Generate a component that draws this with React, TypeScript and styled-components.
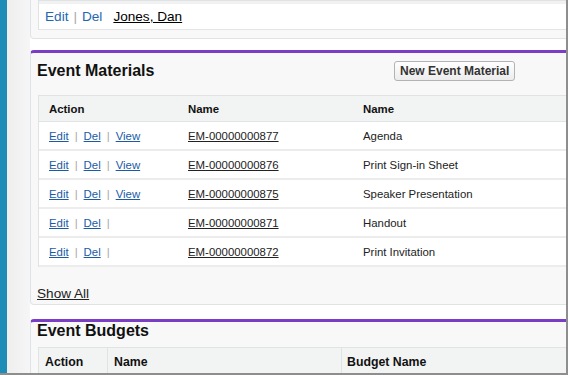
import React from "react";
import styled, { createGlobalStyle, css } from "styled-components";

const GlobalStyle = createGlobalStyle`
  html, body {
    margin: 0;
    padding: 0;
    background: #fff;
    font-family: "Liberation Sans", Arial, Helvetica, sans-serif;
  }
  * { box-sizing: border-box; }
`;

const Frame = styled.div`
  width: 568px;
  height: 375px;
  display: flex;
  overflow: hidden;
  border-right: 2px solid #8e8e8e;
  border-bottom: 2px solid #8e8e8e;
  background: #fff;
`;

const SideRail = styled.div`
  width: 7px;
  flex: none;
  background: #1b8db6;
`;

const Gutter = styled.div`
  width: 23px;
  flex: none;
  background: linear-gradient(to right, #eeeeee, #f6f6f6);
`;

const Main = styled.div`
  flex: 1;
  min-width: 0;
  display: flex;
  flex-direction: column;
  overflow: hidden;
`;

const Panel = styled.section<{ $tail?: boolean; $gap?: number }>`
  margin-right: -14px;
  margin-top: ${(p) => p.$gap ?? 0}px;
  padding: 0 0 0 6px;
  background: #f8f8f8;
  border: 1px solid #e0e3e5;
  border-top: 3px solid #7a3dc5;
  border-radius: 4px 0 0 4px;
  flex: none;
  ${(p) =>
    p.$tail &&
    css`
      border-top: none;
      border-radius: 0 0 0 4px;
      padding-bottom: 8px;
    `}
`;

const PanelHeader = styled.div<{ $compact?: boolean }>`
  display: flex;
  align-items: center;
  height: ${(p) => (p.$compact ? 18 : 36)}px;
  margin-bottom: ${(p) => (p.$compact ? 7 : 6)}px;
`;

const Title = styled.h2<{ $width?: number }>`
  margin: 0;
  width: ${(p) => (p.$width ? `${p.$width}px` : "auto")};
  font-size: 16px;
  font-weight: bold;
  color: #111;
  line-height: 18px;
`;

const NewButton = styled.button`
  height: 20px;
  padding: 0 5px;
  font-family: inherit;
  font-size: 12px;
  font-weight: bold;
  color: #333;
  background: linear-gradient(#ffffff, #ececec);
  border: 1px solid #b3b3b3;
  border-radius: 3px;
  line-height: 18px;
`;

const Table = styled.div`
  margin-left: 1px;
  background: #fff;
  border: 1px solid #e0e3e5;
  border-right: none;
  border-bottom: none;
`;

const Grid = styled.div<{ $cols: string }>`
  display: grid;
  grid-template-columns: ${(p) => p.$cols};
  align-items: stretch;
`;

const HeaderRow = styled(Grid)<{ $height: number }>`
  height: ${(p) => p.$height}px;
  background: #f2f3f3;
  border-bottom: 1px solid #e0e3e5;
`;

const HeadCell = styled.div<{ $pad: number; $size: number; $divided?: boolean }>`
  display: flex;
  align-items: center;
  padding-left: ${(p) => p.$pad}px;
  font-size: ${(p) => p.$size}px;
  font-weight: bold;
  color: #111;
  ${(p) => p.$divided && "border-left: 1px solid #e0e3e5;"}
`;

const DataRow = styled(Grid)`
  height: 29px;
  border-bottom: 2px solid #ececec;
`;

const Cell = styled.div`
  display: flex;
  align-items: center;
  gap: 6px;
  padding-left: 10px;
  font-size: 11.4px;
  color: #222;
  white-space: nowrap;
`;

const ActionLink = styled.a`
  color: #1a5ba6;
  text-decoration: underline;
  cursor: pointer;
`;

const Sep = styled.span<{ $size?: number }>`
  color: #a8a8a8;
  font-size: ${(p) => p.$size ?? 11.4}px;
`;

const RecordLink = styled.a`
  color: #222;
  text-decoration: underline;
  cursor: pointer;
`;

const TopRow = styled.div`
  height: 29px;
  display: flex;
  align-items: center;
  gap: 5px;
  padding-left: 6px;
  border-top: 3px solid #f1f1f1;
  border-bottom: 1px solid #e3e3e3;
  font-size: 13.6px;
`;

const PlainLink = styled.a`
  color: #1f68b3;
  text-decoration: none;
`;

const OwnerLink = styled.a`
  margin-left: 6px;
  color: #000;
  text-decoration: underline;
`;

const ShowAll = styled.a`
  display: block;
  margin: 19px 0 2px;
  line-height: 16px;
  font-size: 13.6px;
  color: #222;
  text-decoration: underline;
`;

type Material = { id: string; name: string; view: boolean };

const materials: Material[] = [
  { id: "EM-00000000877", name: "Agenda", view: true },
  { id: "EM-00000000876", name: "Print Sign-in Sheet", view: true },
  { id: "EM-00000000875", name: "Speaker Presentation", view: true },
  { id: "EM-00000000871", name: "Handout", view: false },
  { id: "EM-00000000872", name: "Print Invitation", view: false },
];

const materialCols = "139px 175px 1fr";
const budgetCols = "68px 234px 1fr";

export default function App() {
  return (
    <>
      <GlobalStyle />
      <Frame>
        <SideRail />
        <Gutter />
        <Main>
          <Panel $tail>
            <Table>
              <TopRow>
                <PlainLink>Edit</PlainLink>
                <Sep $size={13.6}>|</Sep>
                <PlainLink>Del</PlainLink>
                <OwnerLink>Jones, Dan</OwnerLink>
              </TopRow>
            </Table>
          </Panel>

          <Panel $gap={11}>
            <PanelHeader>
              <Title $width={357}>Event Materials</Title>
              <NewButton>New Event Material</NewButton>
            </PanelHeader>
            <Table>
              <HeaderRow $cols={materialCols} $height={26}>
                <HeadCell $pad={10} $size={11.4}>Action</HeadCell>
                <HeadCell $pad={10} $size={11.4}>Name</HeadCell>
                <HeadCell $pad={10} $size={11.4}>Name</HeadCell>
              </HeaderRow>
              {materials.map((m) => (
                <DataRow key={m.id} $cols={materialCols}>
                  <Cell>
                    <ActionLink>Edit</ActionLink>
                    <Sep>|</Sep>
                    <ActionLink>Del</ActionLink>
                    <Sep>|</Sep>
                    {m.view && <ActionLink>View</ActionLink>}
                  </Cell>
                  <Cell>
                    <RecordLink>{m.id}</RecordLink>
                  </Cell>
                  <Cell>{m.name}</Cell>
                </DataRow>
              ))}
            </Table>
            <ShowAll>Show All</ShowAll>
          </Panel>

          <Panel $gap={14}>
            <PanelHeader $compact>
              <Title>Event Budgets</Title>
            </PanelHeader>
            <Table>
              <HeaderRow $cols={budgetCols} $height={28}>
                <HeadCell $pad={6} $size={12.3}>Action</HeadCell>
                <HeadCell $pad={6} $size={12.3} $divided>Name</HeadCell>
                <HeadCell $pad={5} $size={12.3} $divided>Budget Name</HeadCell>
              </HeaderRow>
            </Table>
          </Panel>
        </Main>
      </Frame>
    </>
  );
}
